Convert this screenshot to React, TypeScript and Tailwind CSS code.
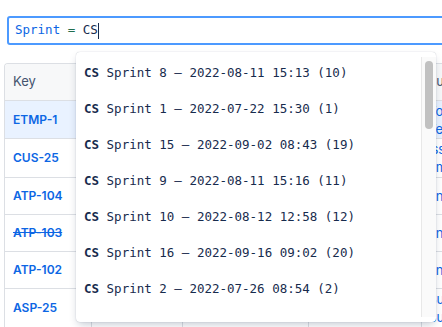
import React from "react";

const items = [
  "Sprint 8 – 2022-08-11 15:13 (10)",
  "Sprint 1 – 2022-07-22 15:30 (1)",
  "Sprint 15 – 2022-09-02 08:43 (19)",
  "Sprint 9 – 2022-08-11 15:16 (11)",
  "Sprint 10 – 2022-08-12 12:58 (12)",
  "Sprint 16 – 2022-09-16 09:02 (20)",
  "Sprint 2 – 2022-07-26 08:54 (2)",
];

const rows = [
  { key: "ETMP-1", h: "h-[38px]", bg: "bg-[#e9f2ff]", strike: false, sum: ["Tooling setup", "Test plan"] },
  { key: "CUS-25", h: "h-[39px]", bg: "bg-white", strike: false, sum: ["Issue tracking", "Email"] },
  { key: "ATP-104", h: "h-[37px]", bg: "bg-white", strike: false, sum: ["Enable export"] },
  { key: "ATP-103", h: "h-[37px]", bg: "bg-white", strike: true, sum: ["Enable import"] },
  { key: "ATP-102", h: "h-[37px]", bg: "bg-white", strike: false, sum: ["Enable search"] },
  { key: "ASP-25", h: "h-[39px]", bg: "bg-white", strike: false, sum: ["Build report", "Bug fix"] },
];

const mono = { fontFamily: '"DejaVu Sans Mono", monospace' };

export default function App() {
  return (
    <div className="relative w-[442px] h-[327px] overflow-hidden bg-white" style={{ fontFamily: 'Inter, "Noto Sans", sans-serif' }}>
      <div className="w-[520px] pt-[16px] pl-[7px]">
        <div className="h-[29px] border-2 border-[#4c9aff] rounded-[3px] flex items-center pl-[6px] text-[12.5px]" style={mono}>
          <span className="text-[#0c66e4]">Sprint</span>
          <span className="text-[#216e4e]">&nbsp;=&nbsp;</span>
          <span className="text-[#172b4d]">CS</span>
          <span className="inline-block w-px h-[16px] bg-[#172b4d]" />
        </div>
        <div className="mt-[18px] -ml-[3px] border-l border-t border-[#dcdfe4] rounded-tl-[4px] overflow-hidden">
          <div className="grid grid-cols-[87px_91px_126px_113px_1fr] h-[37px] bg-[#f7f8f9] border-b border-[#dcdfe4] text-[13px] text-[#44546f]">
            <div className="flex items-center pl-[8px] border-r border-[#dcdfe4]">Key</div>
            <div className="flex items-center pl-[8px] border-r border-[#dcdfe4]">Type</div>
            <div className="flex items-center pl-[8px] border-r border-[#dcdfe4]">Status</div>
            <div className="flex items-center pl-[8px] border-r border-[#dcdfe4]">Assignee</div>
            <div className="flex items-center pl-[6px]">Summary</div>
          </div>
          {rows.map((r) => (
            <div key={r.key} className={`grid grid-cols-[87px_91px_126px_113px_1fr] ${r.h} ${r.bg} border-b border-[#dcdfe4]`}>
              <div className="flex items-center pl-[8px] border-r border-[#dcdfe4]">
                <span className={`text-[12px] font-semibold text-[#0c66e4] ${r.strike ? "line-through" : ""}`}>{r.key}</span>
              </div>
              <div className="border-r border-[#dcdfe4]" />
              <div className="border-r border-[#dcdfe4]" />
              <div className="border-r border-[#dcdfe4]" />
              <div className="flex flex-col justify-center pl-[6px] text-[13px] leading-[18px] text-[#0c66e4]">
                {r.sum.map((s) => (
                  <span key={s} className="whitespace-nowrap">{s}</span>
                ))}
              </div>
            </div>
          ))}
        </div>
      </div>

      <div className="absolute left-[76px] top-[52px] w-[360px] h-[270px] bg-white rounded-[4px] shadow-[0_4px_8px_-2px_rgba(9,30,66,0.25),0_0_1px_rgba(9,30,66,0.31)] overflow-hidden">
        <div className="pt-[3px] pr-[16px]">
          {items.map((t) => (
            <div key={t} className="h-[36px] flex items-center pl-[8px] text-[12.5px] text-[#172b4d] whitespace-nowrap" style={mono}>
              <span className="font-bold">CS</span>
              <span>&nbsp;{t}</span>
            </div>
          ))}
        </div>
        <div className="absolute right-0 top-[5px] bottom-[5px] w-[15px] bg-[#fafafa] border-l border-[#e8e8e8]">
          <div className="absolute left-[3px] top-[4px] w-[8px] h-[68px] rounded-full bg-[#c1c1c1]" />
        </div>
      </div>
    </div>
  );
}
